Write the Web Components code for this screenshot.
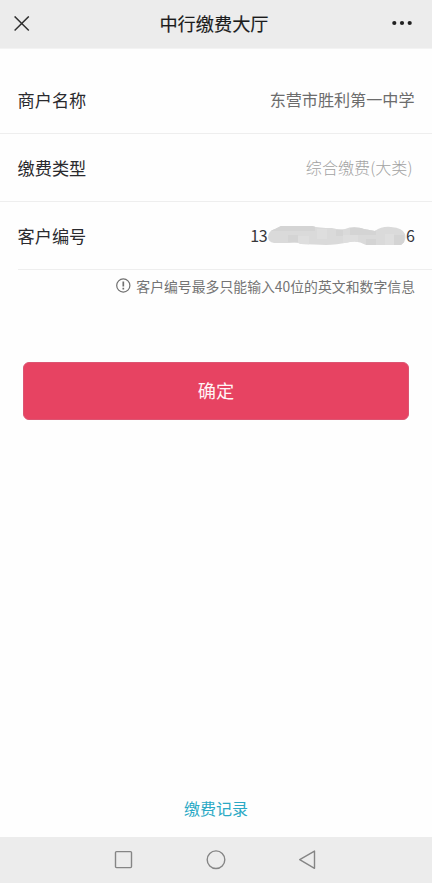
<!DOCTYPE html>
<html lang="zh-CN">
<head>
<meta charset="utf-8">
<title>中行缴费大厅</title>
<style>
html,body{margin:0;height:100%;background:#fefefe}
body{font-family:"Noto Sans CJK SC",sans-serif;color:#2a2a2e;overflow:hidden}
</style>
</head>
<body>
<payment-page></payment-page>
<script>
const define = (name, html) => customElements.define(name, class extends HTMLElement {
  constructor() {
    super();
    this.attachShadow({ mode: 'open' }).innerHTML = html;
  }
});

define('title-bar', `
<style>
:host{display:grid;grid-template-columns:80px 1fr 80px;align-items:center;height:49px;box-sizing:border-box;background:#ececec;border-bottom:1px solid #f3f3f3;padding-bottom:1px;color:#1b1b1b}
h1{margin:0;padding:0 4px 1px 0;font-size:18.2px;line-height:24px;font-weight:400;-webkit-text-stroke:.15px currentColor;text-align:center;white-space:nowrap}
svg{display:block}
.close{margin-left:14px}
.more{justify-self:end;margin:0 19px 1px 0}
</style>
<svg class="close" width="16" height="16" viewBox="0 0 16 16" fill="none" stroke="#303030" stroke-width="1.45"><path d="M.6.4 14.8 14.6M14.8.4.6 14.6"/></svg>
<h1><slot></slot></h1>
<svg class="more" width="22" height="6" viewBox="0 0 22 6" fill="#202020"><circle cx="3.3" cy="3" r="2.1"/><circle cx="11" cy="3" r="2.1"/><circle cx="18.7" cy="3" r="2.1"/></svg>`);

define('form-row', `
<style>
:host{display:flex;justify-content:space-between;align-items:center;height:68px;box-sizing:border-box;padding:0 17.5px 1px;border-bottom:1px solid #eee}
:host([inset]){margin-left:17.5px;padding-left:0}
.label{font-size:17.2px;line-height:24px;padding-top:2px}
.value{display:flex;align-items:center;font-size:16.1px;line-height:24px;color:var(--value-color,#6c6c6c);font-weight:var(--value-weight,400)}
</style>
<span class="label"><slot name="label"></slot></span><span class="value"><slot></slot></span>`);

define('masked-number', `
<style>
:host{display:flex;align-items:center;font-size:16px;letter-spacing:-.3px;line-height:24px;color:#37373b}
svg{display:block;margin:-1px -2px 0 -.5px}
</style>
<slot name="start"></slot>
<svg width="141" height="20" viewBox="0 0 141 20">
<defs><clipPath id="smear"><path d="M1 12Q1 6 8 4L14 1H45Q52 3 65 3Q72 5 78 4Q87 0 97 4L108 6Q115 1 124 2Q136 3 138 9Q140 16 134 20H99Q91 15 83 17Q69 20 59 20L34 19Q31 17 22 18H7Q1 17 1 12Z"/></clipPath></defs>
<g clip-path="url(#smear)"><path fill="#dadada" d="M0 0H141V20H0Z"/><path fill="#d4d4d4" d="M0 0H48V6H0ZM21 10H31V17H21ZM69 5H76V11H69ZM83 3H109V10H83ZM99 14H109V20H99ZM127 10H137V20H127Z"/><path fill="#dedede" d="M31 11H42V20H31ZM50 4H60V14H50ZM76 10H91V18H76ZM118 9H127V20H118Z"/></g></svg>
<slot name="end"></slot>`);

define('input-hint', `
<style>
:host{display:flex;align-items:center;justify-content:flex-end;height:34px;box-sizing:border-box;padding:0 17px 3px 0;font-size:13.87px;line-height:20px;color:#747474;white-space:nowrap}
svg{display:block;margin:0 5.5px 0 0}
</style>
<svg width="15" height="15" viewBox="0 0 15 15" fill="none" stroke="#707070"><circle cx="7.3" cy="7.5" r="6.6" stroke-width="1.2"/><path d="M7.3 3.4V8.5M7.3 9.8V11.4" stroke-width="1.7"/></svg><slot></slot>`);

define('submit-button', `
<style>
:host{display:block;padding:0 23px}
button{display:block;width:100%;height:58px;box-sizing:border-box;border:1px solid #dc5572;border-radius:6px;background:#e74362;color:#fff4f6;font:inherit;font-size:18.2px;line-height:24px;padding:0 0 2px}
</style>
<button type="button"><slot></slot></button>`);

define('record-link', `
<style>
:host{display:block;text-align:center;font-size:16px;line-height:24px;color:#2ba9c5}
</style><slot></slot>`);

define('system-nav', `
<style>
:host{display:flex;justify-content:center;align-items:center;gap:72px;height:46px;background:#ececec}
svg{display:block}
</style>
<svg width="20" height="20" viewBox="0 0 20 20" fill="none" stroke="#858585" stroke-width="1.4"><rect x="1.5" y="1.6" width="16" height="16" rx="1"/></svg>
<svg width="20" height="20" viewBox="0 0 20 20" fill="none" stroke="#858585" stroke-width="1.4"><circle cx="10" cy="9.7" r="8.8"/></svg>
<svg width="20" height="20" viewBox="0 0 20 20" fill="none" stroke="#858585" stroke-width="1.4" stroke-linejoin="round"><path d="M1.7 9.7 16.5 1.1V18.3Z"/></svg>`);

define('payment-page', `
<style>
:host{display:flex;flex-direction:column;height:883px}
.form{padding-top:17px}
.form form-row:nth-child(2){--value-color:#a2a2a2;--value-weight:300}
.paren{padding-right:2px}
submit-button{margin-top:58px}
record-link{margin-top:auto;margin-bottom:17px}
</style>
<title-bar>中行缴费大厅</title-bar>
<div class="form">
<form-row><span slot="label">商户名称</span>东营市胜利第一中学</form-row>
<form-row><span slot="label">缴费类型</span><span class="paren">综合缴费(大类)</span></form-row>
<form-row inset><span slot="label">客户编号</span><masked-number><span slot="start">13</span><span slot="end">6</span></masked-number></form-row>
</div>
<input-hint>客户编号最多只能输入40位的英文和数字信息</input-hint>
<submit-button>确定</submit-button>
<record-link>缴费记录</record-link>
<system-nav></system-nav>`);
</script>
</body>
</html>
